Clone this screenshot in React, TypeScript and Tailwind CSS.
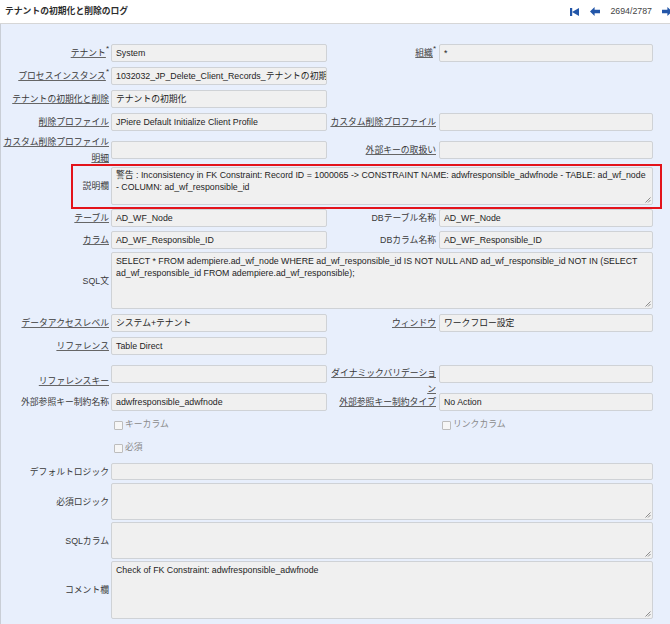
import React from "react";

type LblProps = { text: React.ReactNode; link?: boolean; req?: boolean; right?: boolean };

function Lbl({ text, link = false, req = false, right = false }: LblProps) {
  return (
    <div className={`flex items-center justify-end text-right ${right ? "pr-[3px]" : "pr-[2px]"}`}>
      <span className={`whitespace-nowrap leading-[16px] text-[#3a3a3a] ${link ? "underline decoration-[#666] underline-offset-[1px]" : ""}`}>
        {text}
      </span>
      {req && <sup className="text-[8px] text-[#333]">*</sup>}
    </div>
  );
}

function Grip() {
  return (
    <svg className="absolute right-[1px] bottom-[1px]" width="7" height="7" viewBox="0 0 7 7">
      <path d="M6.5 1.5L1.5 6.5M6.5 4L4 6.5" stroke="#8c8c8c" strokeWidth="1" fill="none" />
    </svg>
  );
}

function Box({ value, cls = "h-[18px]", area = false }: { value?: React.ReactNode; cls?: string; area?: boolean }) {
  return (
    <div
      className={`relative bg-[#f0f0f0] border border-[#cfd2d6] rounded-[2px] text-[#1e1e1e] pl-[4px] pr-[3px] overflow-hidden ${cls} ${
        area ? "pt-[2px] leading-[11.5px]" : "flex items-center leading-[14px]"
      }`}
    >
      {area ? value : <span className="whitespace-nowrap">{value}</span>}
      {area && <Grip />}
    </div>
  );
}

function Check({ text }: { text: string }) {
  return (
    <div className="flex items-center pl-[3px]">
      <span className="w-[9px] h-[9px] border border-[#bdbdbd] bg-[#f6f6f6] rounded-[1px]" />
      <span className="ml-[2px] text-[#8a8a8a] whitespace-nowrap">{text}</span>
    </div>
  );
}

const row = "grid grid-cols-[110px_216px_112px_214px] w-[652px]";

export default function App() {
  return (
    <div className="w-[670px] h-[624px] overflow-hidden bg-white text-[8.8px] font-['Liberation_Sans','Noto_Sans_CJK_JP',sans-serif]">
      {/* header */}
      <div className="h-[24px] flex items-center pl-[5px] border-b border-[#d6d6d6] bg-white overflow-hidden">
        <span className="font-bold text-[#2d2d2d] whitespace-nowrap">テナントの初期化と削除のログ</span>
        <div className="ml-auto -mr-[2px] flex items-center text-[#444]">
          <svg width="9" height="8" viewBox="0 0 9 8" fill="#2356a8">
            <rect x="0" y="0" width="2.2" height="8" />
            <path d="M2 4L9 0V8Z" />
          </svg>
          <svg className="ml-[11px]" width="10" height="9" viewBox="0 0 10 9" fill="#2356a8">
            <path d="M0 4.5L4.6 0V2.7H10V6.3H4.6V9Z" />
          </svg>
          <span className="ml-[10px] whitespace-nowrap">2694/2787</span>
          <svg className="ml-[10px]" width="10" height="9" viewBox="0 0 10 9" fill="#2356a8">
            <path d="M10 4.5L5.4 0V2.7H0V6.3H5.4V9Z" />
          </svg>
        </div>
      </div>

      {/* body */}
      <div className="h-[600px] bg-[#e8effc] border-l border-[#c9ced6] pt-[20px] flex flex-col">
        <div className={`${row} h-[18px]`}>
          <Lbl text="テナント" link req />
          <Box value="System" />
          <Lbl text="組織" link req right />
          <Box value="*" />
        </div>

        <div className={`${row} h-[18px] mt-[5px]`}>
          <Lbl text="プロセスインスタンス" link req />
          <Box value="1032032_JP_Delete_Client_Records_テナントの初期化" />
          <div />
          <div />
        </div>

        <div className={`${row} h-[18px] mt-[5px]`}>
          <Lbl text="テナントの初期化と削除" link />
          <Box value="テナントの初期化" />
          <div />
          <div />
        </div>

        <div className={`${row} h-[18px] mt-[5px]`}>
          <Lbl text="削除プロファイル" link />
          <Box value="JPiere Default Initialize Client Profile" />
          <Lbl text="カスタム削除プロファイル" link right />
          <Box value="" />
        </div>

        <div className={`${row} h-[34px] mt-[2px] items-center`}>
          <Lbl
            text={
              <>
                カスタム削除プロファイル
                <br />
                明細
              </>
            }
            link
          />
          <Box value="" />
          <Lbl text="外部キーの取扱い" link right />
          <Box value="" />
        </div>

        <div className={`${row} relative h-[38px]`}>
          <Lbl text="説明欄" />
          <div className="col-span-3">
            <Box
              area
              cls="h-[38px]"
              value={
                <>
                  <div className="whitespace-nowrap">
                    警告 : Inconsistency in FK Constraint: Record ID = 1000065 -&gt; CONSTRAINT NAME: adwfresponsible_adwfnode - TABLE: ad_wf_node
                  </div>
                  <div className="whitespace-nowrap">- COLUMN: ad_wf_responsible_id</div>
                </>
              }
            />
          </div>
          <div className="absolute left-[70px] -right-[9px] -top-[3px] -bottom-[4px] border-2 border-[#e3131b] pointer-events-none" />
        </div>

        <div className={`${row} h-[18px] mt-[4px]`}>
          <Lbl text="テーブル" link />
          <Box value="AD_WF_Node" />
          <Lbl text="DBテーブル名称" right />
          <Box value="AD_WF_Node" />
        </div>

        <div className={`${row} h-[18px] mt-[4px]`}>
          <Lbl text="カラム" link />
          <Box value="AD_WF_Responsible_ID" />
          <Lbl text="DBカラム名称" right />
          <Box value="AD_WF_Responsible_ID" />
        </div>

        <div className={`${row} h-[57px] mt-[3px]`}>
          <Lbl text="SQL文" />
          <div className="col-span-3">
            <Box
              area
              cls="h-[57px] pt-[3px]"
              value={
                <>
                  <div className="whitespace-nowrap">
                    SELECT * FROM adempiere.ad_wf_node WHERE ad_wf_responsible_id IS NOT NULL AND ad_wf_responsible_id NOT IN (SELECT
                  </div>
                  <div className="whitespace-nowrap">ad_wf_responsible_id FROM adempiere.ad_wf_responsible);</div>
                </>
              }
            />
          </div>
        </div>

        <div className={`${row} h-[18px] mt-[5px]`}>
          <Lbl text="データアクセスレベル" link />
          <Box value="システム+テナント" />
          <Lbl text="ウィンドウ" link right />
          <Box value="ワークフロー設定" />
        </div>

        <div className={`${row} h-[18px] mt-[5px]`}>
          <Lbl text="リファレンス" link />
          <Box value="Table Direct" />
          <div />
          <div />
        </div>

        <div className={`${row} h-[18px] mt-[10px]`}>
          <Lbl text="リファレンスキー" link />
          <Box value="" />
          <Lbl
            text={
              <>
                ダイナミックバリデーショ
                <br />
                ン
              </>
            }
            link
            right
          />
          <Box value="" />
        </div>

        <div className={`${row} h-[18px] mt-[10px]`}>
          <Lbl text="外部参照キー制約名称" />
          <Box value="adwfresponsible_adwfnode" />
          <Lbl text="外部参照キー制約タイプ" link right />
          <Box value="No Action" />
        </div>

        <div className={`${row} h-[14px] mt-[7px]`}>
          <div />
          <Check text="キーカラム" />
          <div />
          <Check text="リンクカラム" />
        </div>

        <div className={`${row} h-[14px] mt-[9px]`}>
          <div />
          <Check text="必須" />
          <div />
          <div />
        </div>

        <div className={`${row} h-[17px] mt-[8px]`}>
          <Lbl text="デフォルトロジック" />
          <div className="col-span-3">
            <Box value="" cls="h-[17px]" />
          </div>
        </div>

        <div className={`${row} h-[37px] mt-[3px]`}>
          <Lbl text="必須ロジック" />
          <div className="col-span-3">
            <Box area value="" cls="h-[37px]" />
          </div>
        </div>

        <div className={`${row} h-[37px] mt-[2px]`}>
          <Lbl text="SQLカラム" />
          <div className="col-span-3">
            <Box area value="" cls="h-[37px]" />
          </div>
        </div>

        <div className={`${row} h-[58px] mt-[2px]`}>
          <Lbl text="コメント欄" />
          <div className="col-span-3">
            <Box
              area
              cls="h-[58px] pt-[3px]"
              value={<div className="whitespace-nowrap">Check of FK Constraint: adwfresponsible_adwfnode</div>}
            />
          </div>
        </div>
      </div>
    </div>
  );
}
